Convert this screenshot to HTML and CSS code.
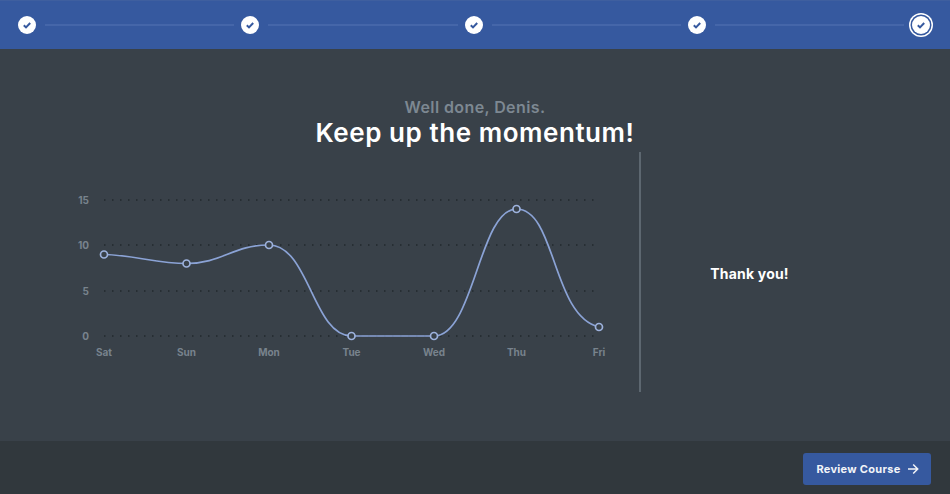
FILE: index.html
```html
<!DOCTYPE html>
<html>
<head>
<meta charset="utf-8">
<title>Keep up the momentum</title>
<link rel="stylesheet" href="styles.css">
</head>
<body>
<div class="progress">
  <span class="step"><svg width="18" height="18" viewBox="0 0 18 18"><path class="tick" d="M5.800 9.200l2.200 2.200 4.200-4.400"/></svg></span>
  <span class="line"></span>
  <span class="step"><svg width="18" height="18" viewBox="0 0 18 18"><path class="tick" d="M5.800 9.200l2.200 2.200 4.200-4.400"/></svg></span>
  <span class="line"></span>
  <span class="step"><svg width="18" height="18" viewBox="0 0 18 18"><path class="tick" d="M5.800 9.200l2.200 2.200 4.200-4.400"/></svg></span>
  <span class="line"></span>
  <span class="step"><svg width="18" height="18" viewBox="0 0 18 18"><path class="tick" d="M5.800 9.200l2.200 2.200 4.200-4.400"/></svg></span>
  <span class="line"></span>
  <span class="step current"><svg width="18" height="18" viewBox="0 0 18 18"><path class="tick" d="M5.800 9.200l2.200 2.200 4.200-4.400"/></svg></span>
</div>
<div class="content">
  <div class="heading">
    <div class="greeting">Well done, Denis.</div>
    <h1>Keep up the momentum!</h1>
  </div>
  <div class="panels">
    <div class="chart">
      <svg width="640" height="240" viewBox="0 152 640 240">
        <g class="grid">
          <line x1="104" y1="200" x2="597" y2="200"/>
          <line x1="104" y1="245" x2="597" y2="245"/>
          <line x1="104" y1="291" x2="597" y2="291"/>
          <line x1="104" y1="336" x2="597" y2="336"/>
        </g>
        <g class="axis">
          <text x="89" y="204" text-anchor="end">15</text>
          <text x="89" y="249" text-anchor="end">10</text>
          <text x="89" y="295" text-anchor="end">5</text>
          <text x="89" y="340" text-anchor="end">0</text>
          <text x="104" y="356" text-anchor="middle">Sat</text>
          <text x="186.500" y="356" text-anchor="middle">Sun</text>
          <text x="269" y="356" text-anchor="middle">Mon</text>
          <text x="351.500" y="356" text-anchor="middle">Tue</text>
          <text x="434" y="356" text-anchor="middle">Wed</text>
          <text x="516.500" y="356" text-anchor="middle">Thu</text>
          <text x="599" y="356" text-anchor="middle">Fri</text>
        </g>
        <path class="curve" d="M104 254.500C132 255 158 263.500 186.500 263.500C222 263.500 233 245 269 245C309 245 313 336 351.500 336L434 336C474 336 479 209 516.500 209C556 209 552 316 599 327"/>
        <g class="dots">
          <circle cx="104" cy="254.500" r="3.500"/>
          <circle cx="186.500" cy="263.500" r="3.500"/>
          <circle cx="269" cy="245" r="3.500"/>
          <circle cx="351.500" cy="336" r="3.500"/>
          <circle cx="434" cy="336" r="3.500"/>
          <circle cx="516.500" cy="209" r="3.500"/>
          <circle cx="599" cy="327" r="3.500"/>
        </g>
      </svg>
    </div>
    <div class="thanks">Thank you!</div>
  </div>
</div>
<div class="footer">
  <a class="btn" href="#">Review Course
    <svg width="12" height="12" viewBox="0 0 12 12"><path d="M1 6h9.500M6.200 1.500L10.700 6l-4.500 4.500"/></svg>
  </a>
</div>
</body>
</html>
```

FILE: styles.css
```css
html, body {margin: 0; padding: 0}
body {width: 950px; height: 494px; overflow: hidden; display: flex; flex-direction: column; background: #394149; font-family: "Inter", "Liberation Sans", sans-serif}

.progress {height: 48px; border-top: 1px solid #3f5f9f; background: #36599f; display: flex; align-items: center; padding: 0 20px 0 18px; flex: none}
.step {width: 18px; height: 18px; border-radius: 50%; background: #fff; display: block; flex: none}
.step svg {display: block}
.step.current {margin-left: 1px; box-shadow: 0 0 0 1.500px #36599f, 0 0 0 3px #fff}
.line {flex: 1; height: 2px; margin: 0 7px 0 9px; background: #4566a9}
.tick {fill: none; stroke: #36599f; stroke-width: 2}

.content {flex: 1; display: flex; flex-direction: column; min-height: 0}
.heading {text-align: center; padding-top: 48px; height: 55px}
.greeting {font-size: 16px; line-height: 20px; font-weight: 600; letter-spacing: .4px; color: #7d8892}
h1 {margin: 0; font-size: 26px; line-height: 31px; font-weight: 600; letter-spacing: .55px; color: #fff}
.panels {display: flex; height: 240px}
.chart {width: 639px; border-right: 2px solid #5d6770; flex: none}
.chart svg {display: block}
.thanks {flex: 1; display: flex; align-items: center; justify-content: center; font-size: 14px; font-weight: 700; letter-spacing: .2px; color: #fff; padding: 3px 92px 0 0}

.grid line {stroke: #22282d; stroke-width: 1.500; stroke-dasharray: 1.500 6.500}
.axis text {font-size: 10px; font-weight: 700; fill: #78838d}
.curve {fill: none; stroke: #8ba3d6; stroke-width: 1.700}
.dots circle {fill: #394149; stroke: #9db2dd; stroke-width: 1.700}

.footer {height: 53px; flex: none; background: #31383d; display: flex; align-items: center; justify-content: flex-end; padding: 3px 19px 0 0; box-sizing: border-box}
.btn {width: 128px; height: 32px; padding-left: 1px; box-sizing: border-box; background: #36599f; border-radius: 3px; color: #f2f4f8; text-decoration: none; font-size: 11px; font-weight: 700; letter-spacing: .3px; display: flex; align-items: center; justify-content: center; gap: 6px}
.btn svg {fill: none; stroke: #f2f4f8; stroke-width: 1.500}
```
